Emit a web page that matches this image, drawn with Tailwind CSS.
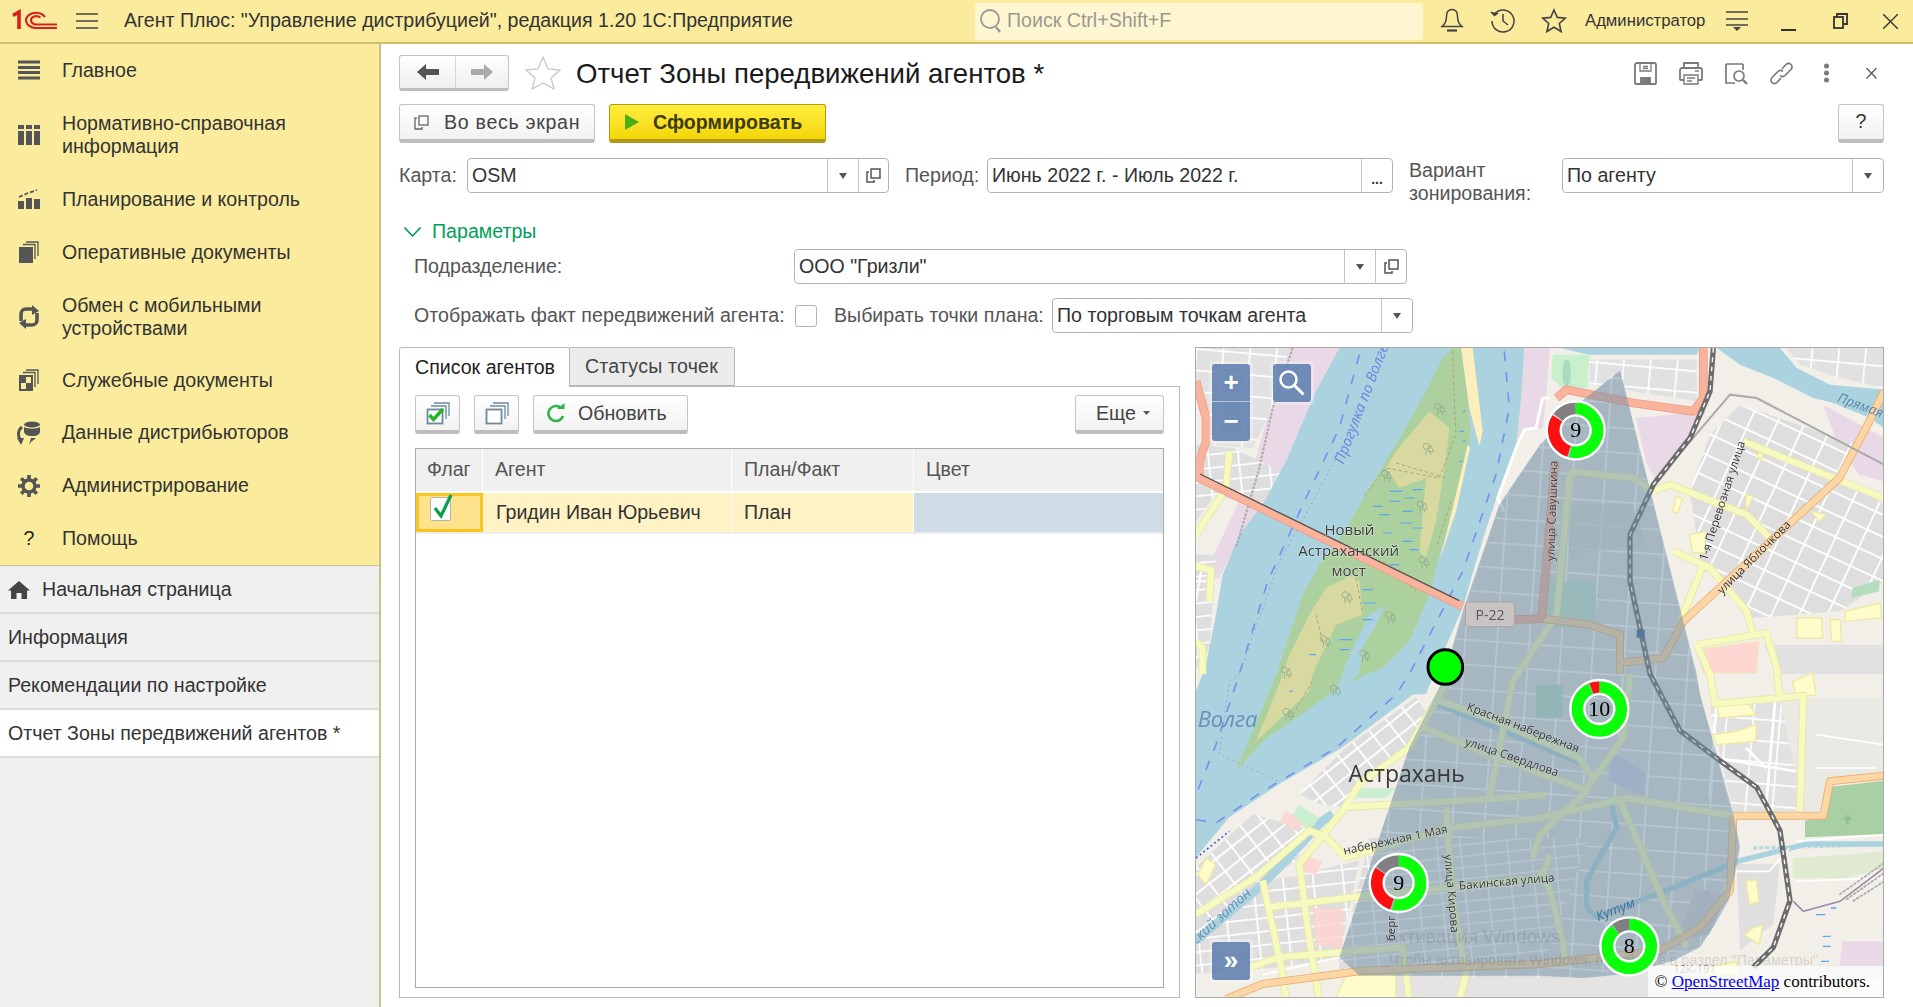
<!DOCTYPE html>
<html lang="ru">
<head>
<meta charset="utf-8">
<title>Отчет Зоны передвижений агентов</title>
<script src="https://cdn.jsdelivr.net/npm/@tailwindcss/browser@4"></script>
</head>
<body class="font-['Liberation_Sans'] text-[19.6px] text-[#333] bg-white overflow-hidden">
<div class="w-[1913px] h-[1007px] flex flex-col overflow-hidden">

<!-- TOP BAR -->
<header class="h-[44px] shrink-0 bg-[#fbec9d] border-b-2 border-[#cdbf6a] flex items-center relative">
  <svg class="ml-[12px] shrink-0" width="46" height="24" viewBox="0 0 46 24" fill="none" stroke="#d8201f"><path d="M1 6.500 L7 3 V20" stroke-width="3.600"/><path d="M33 8 A10 7.500 0 0 0 14 11.500 A9.500 8 0 0 0 24 19 H45" stroke-width="2.200"/><path d="M28.500 8.500 A5.500 4 0 0 0 19 11.500 A5.500 4.500 0 0 0 25 15.500 H45" stroke-width="2.200"/></svg>
  <svg class="ml-[18px] shrink-0" width="22" height="18" viewBox="0 0 22 18" stroke="#444" stroke-width="1.300"><path d="M0 2H22M0 9H22M0 16H22"/></svg>
  <div class="ml-[26px] w-[851px] shrink-0 whitespace-nowrap">Агент Плюс: "Управление дистрибуцией", редакция 1.20 1С:Предприятие</div>
  <div class="w-[448px] h-[37px] shrink-0 bg-[#fdf6d0] rounded-[3px] flex items-center pl-[3px] text-[#9a9a90]">
    <svg width="26" height="30" viewBox="0 0 26 30" fill="none" stroke="#999" stroke-width="1.800"><circle cx="12" cy="13" r="9"/><path d="M18 21l4 5" stroke-width="2.400"/></svg>
    <span class="ml-[3px]">Поиск Ctrl+Shift+F</span>
  </div>
  <div class="ml-[17px] flex items-center">
    <svg width="24" height="26" viewBox="0 0 24 26" fill="none" stroke="#444" stroke-width="1.500"><path d="M12 1.500c-4 0-5.500 3-5.500 7 0 5-2 8-4.500 10h20c-2.500-2-4.500-5-4.500-10 0-4-1.500-7-5.500-7z"/><path d="M7 22.500h10" stroke-width="2.200"/></svg>
    <svg class="ml-[26px]" width="26" height="26" viewBox="0 0 26 26" fill="none" stroke="#444" stroke-width="1.500"><path d="M4.500 6A11 11 0 1 1 2 13"/><path d="M1 4l3.500 3.500L8 5" fill="#444"/><path d="M13 6v7l5 4"/></svg>
    <svg class="ml-[25px]" width="26" height="26" viewBox="0 0 26 26" fill="none" stroke="#444" stroke-width="1.600"><path d="M13 2l3.300 7.400 8 .8-6 5.300 1.800 8L13 19.300 5.900 23.500l1.800-8-6-5.300 8-.8z"/></svg>
    <span class="ml-[18px] text-[16.7px] whitespace-nowrap w-[120px]">Администратор</span>
    <svg class="ml-[21px]" width="22" height="22" viewBox="0 0 22 22" stroke="#444" stroke-width="1.400"><path d="M0 2H22M0 9H22M0 15H22" /><path d="M7 17h8l-4 4z" fill="#444" stroke="none"/></svg>
    <svg class="ml-[33px]" width="15" height="22" viewBox="0 0 15 22" stroke="#333" stroke-width="2"><path d="M0 20H15"/></svg>
    <svg class="ml-[37px]" width="15" height="16" viewBox="0 0 15 16" fill="none" stroke="#333" stroke-width="1.800"><rect x="1" y="4" width="9" height="11"/><path d="M4 4V1h10v10h-4"/></svg>
    <svg class="ml-[35px]" width="15" height="15" viewBox="0 0 15 15" stroke="#333" stroke-width="1.400"><path d="M0 0L15 15M15 0L0 15"/></svg>
  </div>
</header>

<div class="flex flex-1 min-h-0">
<!-- SIDEBAR -->
<aside class="w-[381px] shrink-0 bg-[#f0f0f0] border-r-2 border-[#c9c08a] flex flex-col">
  <nav class="bg-[#fbec9d] border-b border-[#c9c08a] h-[522px] shrink-0 leading-[23px] flex flex-col">
    <a class="h-[53px] flex items-center"><span class="w-[62px] flex justify-center pr-[4px]"><svg width="22" height="20" viewBox="0 0 22 20" stroke="#555" stroke-width="3"><path d="M0 2H22M0 7.500H22M0 12.500H22M0 18H22"/></svg></span>Главное</a>
    <a class="h-[76px] flex items-center"><span class="w-[62px] flex justify-center pr-[4px]"><svg width="22" height="20" viewBox="0 0 22 20" fill="#555"><path d="M0 0h6v4H0zM8 0h6v4H8zM16 0h6v4h-6zM0 6h6v14H0zM8 6h6v14H8zM16 6h6v14h-6z"/></svg></span><span>Нормативно-справочная<br>информация</span></a>
    <a class="h-[53px] flex items-center"><span class="w-[62px] flex justify-center pr-[4px]"><svg width="22" height="20" viewBox="0 0 22 20" fill="#555"><path d="M0 12h6v8H0zM8 9h6v11H8zM16 10h6v10h-6z"/><path d="M1 8l9-4 9-3" stroke="#555" stroke-width="1.800" stroke-dasharray="4 2" fill="none"/></svg></span>Планирование и контроль</a>
    <a class="h-[53px] flex items-center"><span class="w-[62px] flex justify-center pr-[4px]"><svg width="20" height="22" viewBox="0 0 20 22" fill="#555"><path d="M0 6h14v16H0z"/><path d="M4 3.500h12V18M7 1h12v14" fill="none" stroke="#555" stroke-width="1.300"/></svg></span>Оперативные документы</a>
    <a class="h-[76px] flex items-center"><span class="w-[62px] flex justify-center pr-[4px]"><svg width="22" height="24" viewBox="0 0 22 24" fill="none" stroke="#555" stroke-width="3.600"><path d="M3 16V9a5 5 0 0 1 5-5h7"/><path d="M14 0l7 6-7 4z" fill="#555" stroke="none"/><path d="M19 8v7a5 5 0 0 1-5 5H7"/><path d="M8 24l-7-6 7-4z" fill="#555" stroke="none"/></svg></span><span>Обмен с мобильными<br>устройствами</span></a>
    <a class="h-[52px] flex items-center"><span class="w-[62px] flex justify-center pr-[4px]"><svg width="20" height="22" viewBox="0 0 20 22" fill="#555"><path d="M0 6h14v16H0z"/><path d="M7 8h5v6H7zM2 14h5v6H2z" fill="#fbec9d"/><path d="M4 3.500h12V18M7 1h12v14" fill="none" stroke="#555" stroke-width="1.300"/></svg></span>Служебные документы</a>
    <a class="h-[53px] flex items-center"><span class="w-[62px] flex justify-center pr-[4px]"><svg width="24" height="24" viewBox="0 0 24 24" fill="#555"><ellipse cx="15" cy="3.500" rx="8" ry="3"/><path d="M7 6c3 2 13 2 16 0v5c-1 4-5 4-8 4-4 0-7-1-8-4z"/><path d="M5 6C1 9 0 15 4 20" fill="none" stroke="#555" stroke-width="3"/><path d="M0 17l7 0-3 7zM12 24l2-7 5 0-5 4z"/></svg></span>Данные дистрибьюторов</a>
    <a class="h-[53px] flex items-center"><span class="w-[62px] flex justify-center pr-[4px]"><svg width="22" height="22" viewBox="0 0 22 22" fill="none" stroke="#555"><circle cx="11" cy="11" r="6" stroke-width="3.400"/><path d="M11 0v5M11 17v5M0 11h5M17 11h5M3.200 3.200l3.500 3.500M15.300 15.300l3.500 3.500M18.800 3.200l-3.500 3.500M6.700 15.300l-3.500 3.500" stroke-width="3.600"/></svg></span>Администрирование</a>
    <a class="h-[53px] flex items-center"><span class="w-[62px] flex justify-center pr-[4px] text-[#222]">?</span>Помощь</a>
  </nav>
  <a class="h-[48px] border-b-2 border-[#dcdcdc] flex items-center pl-[8px] pt-[2px]"><svg class="mr-[12px]" width="22" height="18" viewBox="0 0 22 18" fill="#444"><path d="M11 0l11 9.500h-3V18h-5.500v-6h-5v6H3V9.500H0z"/></svg>Начальная страница</a>
  <a class="h-[48px] border-b-2 border-[#dcdcdc] flex items-center pl-[8px] pt-[2px]">Информация</a>
  <a class="h-[48px] border-b-2 border-[#dcdcdc] flex items-center pl-[8px] pt-[2px]">Рекомендации по настройке</a>
  <a class="h-[48px] border-b-2 border-[#dcdcdc] bg-white flex items-center pl-[8px] pt-[2px]">Отчет Зоны передвижений агентов *</a>
</aside>

<!-- MAIN -->
<main class="flex-1 min-w-0 pl-[18px] pr-[29px] flex flex-col">
  <!-- Title row -->
  <div class="mt-[11px] h-[36px] flex items-center">
    <div class="w-[110px] h-[36px] flex rounded-[3px] border border-[#c4c4c4] border-b-[3px] border-b-[#bdbdbd] bg-linear-to-b from-white to-[#efefef]">
      <span class="w-[56px] border-r border-[#d6d6d6] flex items-center justify-center"><svg width="22" height="16" viewBox="0 0 22 16" fill="#555"><path d="M0 8l9-8v5h13v6H9v5z"/></svg></span>
      <span class="flex-1 flex items-center justify-center"><svg width="22" height="16" viewBox="0 0 22 16" fill="#aaa"><path d="M22 8l-9-8v5H0v6h13v5z"/></svg></span>
    </div>
    <svg class="ml-[16px]" width="36" height="34" viewBox="0 0 36 34" fill="#fff" stroke="#c8c8c8" stroke-width="1.300"><path d="M18 1l5 12 12 1-9 8 3 11-11-6-11 6 3-11-9-8 12-1z"/></svg>
    <h1 class="ml-[15px] pt-[1px] text-[27.6px] text-[#1a1a1a] whitespace-nowrap">Отчет Зоны передвижений агентов *</h1>
    <div class="ml-auto mr-[1px] flex items-center gap-[22px]">
      <svg width="23" height="23" viewBox="0 0 23 23" fill="none" stroke="#7a7a7a" stroke-width="1.800"><path d="M3 1h17a2 2 0 0 1 2 2v18a1 1 0 0 1-1 1H2a1 1 0 0 1-1-1V3a2 2 0 0 1 2-2z"/><path d="M6 1v8h11V1M9 4.500h5M9 6.500h5" stroke-width="1.300"/><path d="M7 22v-6h9v6" fill="#7a7a7a"/></svg>
      <svg width="24" height="23" viewBox="0 0 24 23" fill="none" stroke="#7a7a7a" stroke-width="1.800"><path d="M5 6V1h14v5M5 18H2a1 1 0 0 1-1-1V8a2 2 0 0 1 2-2h18a2 2 0 0 1 2 2v9a1 1 0 0 1-1 1h-3"/><path d="M5 13h14v9H5zM8 16h8M8 19h5M16 9h4" stroke-width="1.400"/></svg>
      <svg width="23" height="23" viewBox="0 0 23 23" fill="none" stroke="#7a7a7a" stroke-width="1.700"><path d="M18 2H2a1 1 0 0 0-1 1v18h9M18 2v6"/><circle cx="14" cy="14" r="5"/><path d="M18 18l4 4" stroke-width="2.400"/></svg>
      <svg width="23" height="23" viewBox="0 0 23 23" fill="none" stroke="#7a7a7a" stroke-width="1.700"><path d="M12 7l4-4.500a3.500 3.500 0 0 1 5 5l-6 6a3.500 3.500 0 0 1-5 0"/><path d="M11 16l-4 4.500a3.500 3.500 0 0 1-5-5l6-6a3.500 3.500 0 0 1 5 0"/></svg>
      <svg width="23" height="20" viewBox="0 0 23 20" fill="#7a7a7a"><circle cx="11.500" cy="3" r="2.500"/><circle cx="11.500" cy="10" r="2.500"/><circle cx="11.500" cy="17" r="2.500"/></svg>
      <svg width="23" height="11" viewBox="0 0 23 11" stroke="#555" stroke-width="1.200"><path d="M6.500 0l10 10.500M16.500 0l-10 10.500"/></svg>
    </div>
  </div>

  <!-- Buttons -->
  <div class="mt-[13px] flex items-start">
    <button class="w-[196px] h-[39px] rounded-[3px] border border-[#c4c4c4] border-b-4 border-b-[#bdbdbd] bg-linear-to-b from-white to-[#f2f2f2] flex items-center pl-[14px] text-[#444]">
      <svg width="15" height="15" viewBox="0 0 15 15" fill="none" stroke="#666" stroke-width="1.300"><path d="M3 3H1v11h7v-2"/><rect x="5" y="1" width="9" height="9"/></svg><span class="ml-[15px] pt-[2px] tracking-[0.7px] whitespace-nowrap">Во весь экран</span>
    </button>
    <button class="ml-[14px] w-[217px] h-[39px] rounded-[3px] border border-[#b39d0c] border-b-4 border-b-[#ae9a18] bg-linear-to-b from-[#ffee3b] to-[#f4d600] flex items-center pl-[15px] font-bold text-[#3c3c10]">
      <svg width="14" height="16" viewBox="0 0 14 16" fill="#4cae14"><path d="M0 0l14 8-14 8z"/></svg><span class="ml-[14px] pt-[2px]">Сформировать</span>
    </button>
    <button class="ml-auto w-[46px] h-[39px] rounded-[3px] border border-[#c4c4c4] border-b-4 border-b-[#bdbdbd] bg-linear-to-b from-white to-[#f2f2f2] text-[#333]">?</button>
  </div>

  <!-- Fields -->
  <div class="mt-[15px] h-[50px] flex items-start">
    <label class="w-[68px] h-[35px] pt-[1px] flex items-center text-[#555]">Карта:</label>
    <div class="w-[422px] h-[35px] border border-[#b3b3b3] rounded-[4px] flex items-center">
      <span class="flex-1 pl-[4px] pt-[1px]">OSM</span>
      <span class="w-[31px] h-full border-l border-[#c4c4c4] flex items-center justify-center"><svg width="8" height="6" viewBox="0 0 8 6" fill="#555"><path d="M0 0h8L4 6z"/></svg></span>
      <span class="w-[30px] h-full border-l border-[#c4c4c4] flex items-center justify-center"><svg width="15" height="15" viewBox="0 0 15 15" fill="none" stroke="#555" stroke-width="1.500"><path d="M3 4H1v10h7v-2"/><rect x="5" y="1" width="9" height="9"/></svg></span>
    </div>
    <label class="ml-[16px] w-[82px] h-[35px] pt-[1px] flex items-center text-[#555]">Период:</label>
    <div class="w-[406px] h-[35px] border border-[#b3b3b3] rounded-[4px] flex items-center">
      <span class="flex-1 pl-[4px] pt-[1px]">Июнь 2022 г. - Июль 2022 г.</span>
      <span class="w-[31px] h-full border-l border-[#c4c4c4] flex items-center justify-center pt-[8px] font-bold text-[14px]">...</span>
    </div>
    <label class="ml-[16px] w-[153px] leading-[23px] text-[#555] pt-[1px]">Вариант<br>зонирования:</label>
    <div class="w-[322px] h-[35px] border border-[#b3b3b3] rounded-[4px] flex items-center">
      <span class="flex-1 pl-[4px] pt-[1px]">По агенту</span>
      <span class="w-[31px] h-full border-l border-[#c4c4c4] flex items-center justify-center"><svg width="8" height="6" viewBox="0 0 8 6" fill="#555"><path d="M0 0h8L4 6z"/></svg></span>
    </div>
  </div>

  <!-- Parameters -->
  <div class="mt-[12px] h-[24px] pl-[5px] flex items-center text-[#00a05a]">
    <svg width="17" height="10" viewBox="0 0 17 10" fill="none" stroke="#00a05a" stroke-width="1.600"><path d="M0.500 0.500L8.500 9l8-8.500"/></svg>
    <span class="ml-[11px]">Параметры</span>
  </div>
  <div class="mt-[5px] h-[35px] flex items-center pl-[15px]">
    <span class="w-[380px] pt-[1px] text-[#555]">Подразделение:</span>
    <div class="w-[613px] h-[35px] border border-[#b3b3b3] rounded-[4px] flex items-center">
      <span class="flex-1 pl-[4px] pt-[1px]">ООО "Гризли"</span>
      <span class="w-[31px] h-full border-l border-[#c4c4c4] flex items-center justify-center"><svg width="8" height="6" viewBox="0 0 8 6" fill="#555"><path d="M0 0h8L4 6z"/></svg></span>
      <span class="w-[31px] h-full border-l border-[#c4c4c4] flex items-center justify-center"><svg width="15" height="15" viewBox="0 0 15 15" fill="none" stroke="#555" stroke-width="1.500"><path d="M3 4H1v10h7v-2"/><rect x="5" y="1" width="9" height="9"/></svg></span>
    </div>
  </div>
  <div class="mt-[14px] h-[35px] flex items-center pl-[15px] text-[#555]">
    <span class="w-[381px] whitespace-nowrap tracking-[0.06px]">Отображать факт передвижений агента:</span>
    <span class="w-[22px] h-[22px] border border-[#b3b3b3] rounded-[3px] bg-white"></span>
    <span class="ml-[17px] w-[218px] whitespace-nowrap">Выбирать точки плана:</span>
    <div class="w-[361px] h-[35px] border border-[#b3b3b3] rounded-[4px] flex items-center text-[#333]">
      <span class="flex-1 pl-[4px] pt-[1px]">По торговым точкам агента</span>
      <span class="w-[31px] h-full border-l border-[#c4c4c4] flex items-center justify-center"><svg width="8" height="6" viewBox="0 0 8 6" fill="#555"><path d="M0 0h8L4 6z"/></svg></span>
    </div>
  </div>

  <!-- Lower split -->
  <div class="mt-[14px] h-[651px] flex">
    <!-- Left -->
    <section class="w-[781px] shrink-0 flex flex-col">
      <div class="h-[40px] flex shrink-0 relative z-10">
        <div class="w-[171px] h-[40px] bg-white border border-[#b9b9b9] border-b-0 rounded-t-[3px] flex items-center pl-[15px] text-[#222]">Список агентов</div>
        <div class="w-[165px] h-[39px] bg-[#ebebeb] border border-l-0 border-[#b9b9b9] rounded-tr-[3px] flex items-center pl-[15px] text-[#444] tracking-[0.2px]">Статусы точек</div>
      </div>
      <div class="flex-1 border border-[#b9b9b9] -mt-px px-[15px] flex flex-col min-h-0">
        <div class="mt-[8px] h-[39px] flex items-start shrink-0">
          <button class="w-[45px] h-[39px] rounded-[3px] border border-[#c4c4c4] border-b-4 border-b-[#bdbdbd] bg-linear-to-b from-white to-[#f2f2f2] flex items-center justify-center">
            <svg width="24" height="24" viewBox="0 0 24 24" fill="none" stroke="#6b8aa0" stroke-width="1.300"><path d="M8 2h15v13M5 5h15v13"/><rect x="1.500" y="8.500" width="15" height="14" fill="#fff" stroke-width="1.800"/><path d="M3.500 14l4 4.500L17 8" stroke="#22b522" stroke-width="3.400"/></svg>
          </button>
          <button class="ml-[14px] w-[45px] h-[39px] rounded-[3px] border border-[#c4c4c4] border-b-4 border-b-[#bdbdbd] bg-linear-to-b from-white to-[#f2f2f2] flex items-center justify-center">
            <svg width="24" height="24" viewBox="0 0 24 24" fill="none" stroke="#6b8aa0" stroke-width="1.300"><path d="M8 2h15v13M5 5h15v13"/><rect x="1.500" y="8.500" width="15" height="14" fill="#fff" stroke-width="1.800"/></svg>
          </button>
          <button class="ml-[14px] w-[155px] h-[39px] rounded-[3px] border border-[#c4c4c4] border-b-4 border-b-[#bdbdbd] bg-linear-to-b from-white to-[#f2f2f2] flex items-center pl-[13px] text-[#444]">
            <svg width="18" height="20" viewBox="0 0 18 20" fill="none" stroke="#2fb34a" stroke-width="2.600"><path d="M14 5A7.500 7.500 0 1 0 16 13"/><path d="M10 6h7.500V0z" fill="#2fb34a" stroke="none"/></svg><span class="ml-[13px] pt-[2px]">Обновить</span>
          </button>
          <button class="ml-auto w-[89px] h-[39px] rounded-[3px] border border-[#c4c4c4] border-b-4 border-b-[#bdbdbd] bg-linear-to-b from-white to-[#f2f2f2] flex items-center pl-[20px] text-[#444]">
            <span class="pt-[2px]">Еще</span><svg class="ml-[7px]" width="7" height="4" viewBox="0 0 7 4" fill="#555"><path d="M0 0h7L3.500 4z"/></svg>
          </button>
        </div>
        <div class="mt-[14px] mb-[9px] flex-1 border border-[#a9a9a9] flex flex-col min-h-0">
          <div class="h-[44px] flex bg-[#f0f0f0] border-b-2 border-white shrink-0 text-[#555]">
            <div class="w-[67px] border-r border-white flex items-center pl-[11px]">Флаг</div>
            <div class="w-[249px] border-r border-white flex items-center pl-[12px]">Агент</div>
            <div class="w-[182px] border-r border-white flex items-center pl-[12px]">План/Факт</div>
            <div class="flex-1 flex items-center pl-[12px]">Цвет</div>
          </div>
          <div class="h-[41px] flex border-b-2 border-[#ededed] shrink-0 text-[#333]">
            <div class="w-[67px] bg-[#ffe28c] border-[3px] border-[#f7c51e] flex pl-[11px] pt-[1px]">
              <span class="relative block w-[21px] h-[24px] bg-white border border-[#b3b3b3] rounded-[2px]"><svg class="absolute -top-[6px] left-[2px]" width="22" height="28" viewBox="0 0 22 28" fill="none" stroke="#0b9e4a" stroke-width="3.200"><path d="M2 16l6 8L18 3"/></svg></span>
            </div>
            <div class="w-[249px] bg-[#fff2c4] border-r border-white flex items-center pl-[13px] pt-[1px] whitespace-nowrap">Гридин Иван Юрьевич</div>
            <div class="w-[182px] bg-[#fff2c4] border-r border-white flex items-center pl-[12px] pt-[1px]">План</div>
            <div class="flex-1 bg-[#cfdce5]"></div>
          </div>
        </div>
      </div>
    </section>

    <!-- Map -->
    <section class="ml-[15px] w-[689px] h-[651px] shrink-0 relative overflow-hidden border border-[#aaa]">
      <svg class="block blur-[0.35px]" width="688" height="651" viewBox="0 0 2064 1953" font-family="Open Sans, Noto Sans, sans-serif">
        <defs>
          <pattern id="g1" width="76" height="60" patternUnits="userSpaceOnUse" patternTransform="rotate(25)"><rect width="76" height="60" fill="#dfdede"/><path d="M0 2H76M2 0V60" stroke="#fff" stroke-width="7"/></pattern>
          <pattern id="g2" width="60" height="46" patternUnits="userSpaceOnUse" patternTransform="rotate(-38)"><rect width="60" height="46" fill="#dfdede"/><path d="M0 2H60M2 0V46" stroke="#fff" stroke-width="7"/></pattern>
          <pattern id="g3" width="90" height="40" patternUnits="userSpaceOnUse" patternTransform="rotate(-6)"><rect width="90" height="40" fill="#dfdede"/><path d="M0 2H90M2 0V40" stroke="#fff" stroke-width="6"/></pattern>
          <pattern id="g4" width="80" height="64" patternUnits="userSpaceOnUse" patternTransform="rotate(5)"><rect width="80" height="64" fill="#e2e1e1"/><path d="M0 2H80M2 0V64" stroke="#fff" stroke-width="6"/></pattern>
          <pattern id="c1" width="96" height="74" patternUnits="userSpaceOnUse" patternTransform="rotate(4)"><rect width="96" height="74" fill="#dededf"/><path d="M0 2H96M2 0V74" stroke="#fff" stroke-width="7"/></pattern>
          <pattern id="c2" width="70" height="34" patternUnits="userSpaceOnUse" patternTransform="rotate(-6)"><rect width="70" height="34" fill="#dededf"/><path d="M0 2H70M2 0V34" stroke="#fff" stroke-width="5"/></pattern>
          <path id="yr" d="M1642 280L1912 390L2064 450M1372 430L1422 410L1652 500L1722 570M1432 610L1542 660L1652 790L1672 860M1522 650L1452 820M1502 890L1712 855L1747 978M1502 890L1542 978L1557 1068L1822 1043L1812 1388M1742 978L1752 1048M750 1008L640 1198L490 1308L440 1388L310 1548L340 1778L370 1956M0 1698L180 1588L340 1448L390 1468L450 1528L760 1440L1032 1410L1250 1360L1290 1350L1610 1403M440 1378L880 1353L1050 1340M1122 370L1082 800L950 1000L880 1353M1122 370L1312 390L1372 430M730 1058L900 1118L1150 1230L1190 1290M1302 978L1282 1168L1160 1340L1032 1460L1010 1530M1272 1358L1402 1658L1472 1798M680 1138L900 1228L1180 1330M750 1378L770 1660L810 1878L790 1956M200 1598L260 1878L270 1956M160 1858L250 1828L620 1798L640 1956M220 1678L470 1648L1040 1590L1060 1520M1032 1568L1062 1628L1100 1778L1110 1856M0 655L45 665L40 760M0 880L20 900L20 978M100 310L90 420L0 560" fill="none" stroke-linejoin="round"/>
          <path id="or" d="M2064 130L2020 220L1930 390L1462 820L1402 930L1272 945L1272 978M1272 945L1272 860L1180 830L1042 812M1612 1403L1882 1403L1902 1300L2064 1283M1612 1403L1602 1628L1512 1738L1392 1808L1032 1848L500 1868L200 1908L90 1953" fill="none" stroke-linejoin="round"/>
          <path id="sm" d="M0 100L30 210L30 280L10 340L10 390L800 775M1522 0L1522 150L1492 190L1312 165L1112 125L1082 150M955 815L1042 812M1077 340L1052 640L1037 810" fill="none" stroke-linejoin="round"/>
          <path id="rl" d="M1552 0L1542 130L1482 270L1372 410L1302 560L1302 700L1362 978L1452 1148L1572 1238L1682 1318L1752 1448L1782 1658L1732 1798L1672 1858" fill="none" stroke-linejoin="round"/>
          <g id="tr" fill="none" stroke="#8fa98d" stroke-width="2.500"><circle cx="0" cy="-10" r="9"/><path d="M0 -1V16M14 16V6M14 -14l8 20h-16z"/></g>
        </defs>

        <rect width="2064" height="1953" fill="#f2efe9"/>
        <!-- pink -->
        <g fill="#e9d8e6">
          <path d="M270 0H430L370 130L270 350L200 480L130 570L70 690L20 690L120 480L180 330Z"/>
          <path d="M985 0H1062L1052 130L1040 240L985 250L960 300L900 450L880 520L840 640L720 980L660 980Z"/>
          <path d="M1320 210L1532 190L1380 400L1350 340Z"/>
          <path d="M1882 170L2064 270V400L1990 380L1930 300Z"/>
          <path d="M1940 1780H2064V1860H1930Z"/>
        </g>
        <!-- residential -->
        <path d="M0 0H280L230 180L170 300L40 290L0 100Z" fill="url(#g4)"/>
        <path d="M0 290L110 300L260 370L190 480L60 440L0 520Z" fill="url(#g3)"/>
        <path d="M0 620H60L40 900L0 960Z" fill="url(#g3)"/>
        <path d="M1182 35H1502V160L1182 110Z" fill="url(#g4)"/>
        <path d="M1772 0H2064V120L1932 90L1812 50Z" fill="url(#g4)"/>
        <path d="M1482 430L1542 260L1632 170L1982 290L1922 380L2064 470V700L1932 790L1672 810L1512 640Z" fill="url(#g1)"/>
        <path d="M660 1048L700 1108L640 1198L470 1318L440 1378L370 1368L310 1338L450 1198Z" fill="url(#g2)"/>
        <path d="M0 1558L170 1398L350 1448L300 1538L210 1598L0 1758Z" fill="url(#g2)"/>
        <path d="M220 1598L490 1538L430 1828L250 1858L0 1878V1758Z" fill="url(#g3)"/>
        <path d="M1542 1078L1812 1058L1812 1388L1612 1398Z" fill="url(#g4)"/>
        <path d="M1622 1548L1752 1548L1732 1728L1632 1808Z" fill="#e0dfdf"/>
        <path d="M500 1878L2064 1850V1953H500Z" fill="#e0dfdf" opacity=".7"/>
        <path d="M1702 890H2064V978H1752Z" fill="#e2e1e1"/>
        <path d="M1750 1050H2064V1290H1900L1880 1390H1825Z" fill="#ebe9e4"/>
        <!-- city under zone -->
        <path d="M1272 60L1512 1038L1632 1498L1512 1798L1162 1890L430 1883L430 1828L640 1198L740 998L910 470L1032 290Z" fill="url(#c1)"/>
        <path d="M520 1470H1180L1040 1860H430Z" fill="url(#c2)"/>
        <path d="M1110 470H1310L1350 590L1120 620Z" fill="#d5d8cc" opacity=".7"/>
        <path d="M1020 1010H1100V1110H1020Z" fill="#b7dcc4"/>
        <path d="M1050 700H1200V840L1050 840Z" fill="#c7e3cf"/>
        <path d="M1240 1200L1350 1280L1340 1340L1240 1300Z" fill="#cdd0e6"/>
        <path d="M1500 1620L1590 1640L1540 1760L1440 1780Z" fill="#d8d3d8"/>
        <!-- water -->
        <g fill="#aad3df">
          <path d="M430 0H985L975 150L960 300L905 440L870 540L800 780L730 940L690 1038L650 1040L440 1198L250 1308L100 1408L0 1528V1030L30 950L60 800L80 680L130 560L200 470L270 340L360 130Z"/>
          <path d="M1562 0H1752L1802 60L1902 110L2064 125V240L2022 210L1912 165L1852 150L1732 90L1632 50Z"/>
          <path d="M1092 0H1512L1502 20L1180 20Z"/>
        </g>
        <g fill="none" stroke="#aad3df" stroke-linejoin="round">
          <path d="M1172 1678L1202 1708L1382 1638L1632 1538L1832 1488L2064 1488" stroke-width="16"/>
          <path d="M1172 1678L1172 1598L1262 1438L1247 1368" stroke-width="16"/>
          <path d="M0 1778L190 1618L270 1538L380 1418L410 1398" stroke-width="26"/>
          <path d="M720 1068L900 1140L1160 1250" stroke-width="14"/>
        </g>
        <!-- island -->
        <path d="M770 0H800L825 250L810 330L780 480L730 620L700 740L640 880L560 960L510 978L400 1040L200 1180L120 1270L240 980L320 740L370 650L440 560L520 420L600 290L690 130L740 30Z" fill="#add19e"/>
        <path d="M570 770L540 830L500 900L490 978L430 1030L410 1060L440 970L480 880L520 800Z" fill="#aad3df"/>
        <g fill="#d8d9a0">
          <path d="M700 190L600 310L570 360L610 420L690 390L670 610L690 630L720 520L750 330L760 240Z"/>
          <path d="M470 680L390 720L340 800L280 920L250 1008L180 1180L340 1030L350 978L420 830L500 800L490 700Z"/>
        </g>
        <g fill="#fdeebd">
          <path d="M795 0H830L860 250L850 295L820 180Z"/>
          <path d="M815 290L822 300L780 490L730 640L770 480Z"/>
        </g>
        <g fill="none" stroke="#b8a067" stroke-width="3" stroke-dasharray="10 8">
          <path d="M770 10L775 150L780 260L730 390L570 360L500 450M600 345L750 390M765 460L720 600M480 690L500 800M360 800L380 880M560 640L660 730M350 1000L290 1100"/>
        </g>
        <path d="M580 430h40M650 425h30M530 475h30M580 460h30M625 450h30M550 500h30M620 490h30M610 525h40M560 555h30M650 540h30M620 580h30M640 605h30M580 650h30M500 725h30M500 765h40M500 815h30M430 875h40M430 905h30M340 920h20M280 1030h10M800 190h10M790 250h15M800 280h10M790 340h10" stroke="#5aa8f5" stroke-width="3.500" fill="none"/>
        <use href="#tr" x="725" y="185"/><use href="#tr" x="690" y="305"/><use href="#tr" x="565" y="385"/><use href="#tr" x="672" y="478"/><use href="#tr" x="678" y="645"/><use href="#tr" x="447" y="750"/><use href="#tr" x="577" y="810"/><use href="#tr" x="382" y="882"/><use href="#tr" x="500" y="925"/><use href="#tr" x="265" y="975"/><use href="#tr" x="270" y="1100"/>
        <use href="#tr" x="412" y="1030"/>
        <!-- river lines -->
        <g fill="none" stroke="#7b8ff0" stroke-width="5" stroke-dasharray="30 32">
          <path d="M490 20L430 240L330 450L215 700L130 978L60 1190L0 1340"/>
          <path d="M925 10L940 180L900 380L800 670L640 978L600 1040L420 1200L200 1330L60 1425L0 1415"/>
        </g>
        <path d="M500 180L340 480L250 640L130 978L100 1000L70 1220L250 1300" fill="none" stroke="#a7a0c0" stroke-width="3" stroke-dasharray="6 10"/>
        <path d="M0 1530L100 1450" fill="none" stroke="#3b62dd" stroke-width="5" stroke-dasharray="6 8"/>
        <path d="M290 0L230 180L190 360L120 600" fill="none" stroke="#aaa" stroke-width="6" stroke-dasharray="8 4"/>
        <!-- white roads -->
        <g fill="none" stroke="#fff" stroke-linejoin="round">
          <path d="M1062 150L1040 150L1020 240L985 245L960 300L905 450L925 490" stroke-width="9"/>
          <path d="M1737 1060L1710 1380M1560 1230L1800 1270M1562 1060L1540 1350M1710 1260L1650 1200" stroke-width="8"/>
          <path d="M1590 1570H1720L1780 1500M1800 1600L2064 1590M1800 1480L2064 1460" stroke-width="5"/>
          <path d="M1860 1160L2064 1190M1860 1260H2040" stroke-width="5"/>
          <path d="M20 640L0 760M0 700H40M200 1880L640 1780" stroke-width="6"/>
        </g>
        <!-- green & buildings -->
        <path d="M1892 1318L2064 1298V1458L1827 1468V1418L1882 1408Z" fill="#a9cfa4"/>
        <path d="M1955 1400v30M1943 1412h24" stroke="#8fc08a" stroke-width="7"/>
        <path d="M1790 1530L1950 1520L2064 1510V1560L1950 1590H1790Z" fill="#dfead0"/>
        <path d="M1070 20H1180L1175 120L1100 120L1065 90Z" fill="#c9f0cd"/>
        <path d="M1100 60a12 25 0 0 1 24 0v30a12 25 0 0 1-24 0z" fill="#a8dcc0"/>
        <path d="M1970 720L2050 695L2050 730L1965 750Z" fill="#b4ddbd"/>
        <path d="M1505 905L1690 880L1680 975L1520 975Z" fill="#ffd6d2" stroke="#ececa0" stroke-width="2"/>
        <path d="M1700 1890H2064V1953H1700Z" fill="#f2efe9"/>
        <g fill="#fffccc" stroke="#ece8a2" stroke-width="4">
          <path d="M1947 790L2052 765L2057 810L1947 820Z"/>
          <path d="M1802 810L1877 810L1880 870L1802 870Z"/>
          <path d="M1902 815L1932 815L1937 880L1907 880Z"/>
          <path d="M1480 560L1530 550L1525 615L1490 615Z"/>
          <path d="M1650 440L1672 445L1650 490Z"/>
          <path d="M1440 445L1460 450L1445 495L1430 490Z"/>
          <path d="M1680 315L1700 315L1695 340Z"/>
          <path d="M1845 490L1890 500L1870 520Z"/>
          <path d="M1560 1060L1660 1070L1680 1100L1570 1110Z"/>
          <path d="M1620 1150L1680 1130L1680 1180L1560 1190L1550 1160Z"/>
          <path d="M1650 1600L1680 1595L1690 1660L1660 1670Z"/>
          <path d="M1670 1740L1700 1730L1690 1790L1645 1760Z"/>
          <path d="M30 1530L60 1550L30 1610L5 1580Z"/>
          <path d="M1790 1000L1850 975L1860 1040L1800 1050Z"/>
          <path d="M1540 1860L1620 1840L1630 1880L1530 1885Z"/>
          <path d="M450 1880H600V1950H420Z"/>
        </g>
        <g fill="#ffd3cf" opacity=".8">
          <path d="M350 1680H440V1800L360 1790Z"/><path d="M320 1520L380 1540L360 1580L310 1570Z"/>
          <path d="M270 1390L330 1420L300 1450L250 1420Z"/>
        </g>
        <g fill="#c8f0d0" opacity=".9"><path d="M310 1370L370 1410L340 1450L290 1400Z"/><path d="M490 1320H600L570 1350H480Z"/></g>
        <!-- roads -->
        <use href="#yr" stroke="#e5e7a6" stroke-width="23"/><use href="#yr" stroke="#f7fabf" stroke-width="18"/>
        <use href="#or" stroke="#e8ae6d" stroke-width="24"/><use href="#or" stroke="#fcd6a4" stroke-width="19"/>
        <use href="#sm" stroke="#ef9c85" stroke-width="26"/><use href="#sm" stroke="#f9b29c" stroke-width="21"/>
        <path d="M12 378L790 758" fill="none" stroke="#555" stroke-width="4"/>
        <path d="M1672 1500L2064 1490" stroke="#aad3df" stroke-width="10" stroke-dasharray="12 6" fill="none" opacity=".8"/>
        <path d="M1372 410L1602 140L1682 150L2064 350" fill="none" stroke="#aaa" stroke-width="6"/>
        <path d="M1792 1660L1822 1690L1932 1660L2064 1560" fill="none" stroke="#a08aa8" stroke-width="5"/>
        <path d="M1930 1640L2064 1545M1950 1655L2064 1575M1970 1660L2064 1600" fill="none" stroke="#aaa" stroke-width="5" stroke-dasharray="10 3"/>
        <use href="#rl" stroke="#6c6c6c" stroke-width="16"/><use href="#rl" stroke="#fff" stroke-width="4" stroke-dasharray="14 14"/>
        <path d="M1860 1700h28M1880 1765h24M1880 1795h24M1875 1840h24M1905 1680h16" stroke="#5aa8f5" stroke-width="4"/>
        <rect x="1322" y="845" width="24" height="24" fill="#3c5f98" />

        <!-- zone -->
        <path d="M1272 68L1502 978L1512 1038L1612 1398L1632 1498L1617 1578L1597 1658L1552 1738L1512 1798L1432 1838L1292 1878L1162 1890L1032 1883L490 1883L430 1828L640 1198L740 998L800 790L910 470L1032 290L1162 155Z" fill="#6d8fa6" fill-opacity=".5"/>

        <!-- labels -->
        <g text-anchor="middle" fill="#3a3a3a" font-size="45" paint-order="stroke" stroke="#ffffff" stroke-opacity=".5" stroke-width="3">
          <text x="460" y="562">Новый</text><text x="458" y="624">Астраханский</text><text x="458" y="684">мост</text>
        </g>
        <text x="632" y="1302" text-anchor="middle" font-size="69" fill="#3a3a3a">Астрахань</text>
        <text x="5" y="1138" font-size="66" font-style="italic" fill="#6a8fb5">Волга</text>
        <text transform="translate(442 350) rotate(-69)" font-size="44" font-style="italic" fill="#6f7fe0">Прогулка по Волге</text>
        <text transform="translate(1922 160) rotate(20)" font-size="40" font-style="italic" fill="#5c86ad">Прямая</text>
        <text transform="translate(1207 1720) rotate(-22)" font-size="40" font-style="italic" fill="#3e6d98">Кутум</text>
        <text transform="translate(0 1790) rotate(-42)" font-size="42" font-style="italic" fill="#6a8fb5">ский затон</text>
        <g font-size="35" fill="#333" paint-order="stroke" stroke="#ffffff" stroke-opacity=".35" stroke-width="3">
          <text transform="translate(1075 640) rotate(-88)" fill="#403535">улица Савушкина</text>
          <text transform="translate(1578 740) rotate(-45)">улица Яблочкова</text>
          <text transform="translate(1532 640) rotate(-72)">1-я Перевозная улица</text>
          <text transform="translate(810 1085) rotate(21)">Красная набережная</text>
          <text transform="translate(805 1190) rotate(19)">улица Свердлова</text>
          <text transform="translate(445 1520) rotate(-12)">набережная 1 Мая</text>
          <text transform="translate(745 1520) rotate(85)">улица Кирова</text>
          <text transform="translate(790 1625) rotate(-5)">Бакинская улица</text>
          <text transform="translate(598 1780) rotate(-90)">берг</text>
        </g>
        <g>
          <rect x="808" y="762" width="148" height="74" rx="8" fill="#c9c3c3" stroke="#a9a3a3" stroke-width="3"/>
          <text x="882" y="815" text-anchor="middle" font-size="42" fill="#55555f">Р-22</text>
        </g>
        <text x="1432" y="1875" font-size="34" fill="#5e4e3a" opacity=".8">12К-191</text>
        <g fill="#555" fill-opacity=".18" font-family="Liberation Sans">
          <text x="568" y="1785" font-size="57">Активация Windows</text>
          <text x="580" y="1850" font-size="43">Чтобы активировать Windows, перейдите в раздел "Параметры".</text>
        </g>

        <!-- green point -->
        <circle cx="748" cy="957" r="52" fill="#00ff00" stroke="#000" stroke-width="9"/>

        <!-- donuts -->
        <g fill="none" font-family="Liberation Serif">
          <g transform="translate(1139 247)">
            <circle r="65" stroke="#0bff0b" stroke-width="37" pathLength="360" stroke-dasharray="193 167" transform="rotate(-90)"/>
            <circle r="65" stroke="#ff1010" stroke-width="37" pathLength="360" stroke-dasharray="105 255" stroke-dashoffset="-197" transform="rotate(-90)"/>
            <circle r="65" stroke="#808080" stroke-width="37" pathLength="360" stroke-dasharray="54 306" stroke-dashoffset="-305" transform="rotate(-90)"/>
            <circle r="87" stroke="#fff" stroke-width="7"/><circle r="45" stroke="#fff" stroke-width="7"/>
            <text y="21" text-anchor="middle" font-size="66" fill="#000">9</text>
          </g>
          <g transform="translate(1210 1083)">
            <circle r="65" stroke="#0bff0b" stroke-width="37" pathLength="360" stroke-dasharray="335 25" transform="rotate(-90)"/>
            <circle r="65" stroke="#ff1010" stroke-width="37" pathLength="360" stroke-dasharray="21 339" stroke-dashoffset="-337" transform="rotate(-90)"/>
            <circle r="87" stroke="#fff" stroke-width="7"/><circle r="45" stroke="#fff" stroke-width="7"/>
            <text y="22" text-anchor="middle" font-size="66" fill="#000">10</text>
          </g>
          <g transform="translate(608 1605)">
            <circle r="65" stroke="#0bff0b" stroke-width="37" pathLength="360" stroke-dasharray="193 167" transform="rotate(-90)"/>
            <circle r="65" stroke="#ff1010" stroke-width="37" pathLength="360" stroke-dasharray="105 255" stroke-dashoffset="-197" transform="rotate(-90)"/>
            <circle r="65" stroke="#808080" stroke-width="37" pathLength="360" stroke-dasharray="54 306" stroke-dashoffset="-305" transform="rotate(-90)"/>
            <circle r="87" stroke="#fff" stroke-width="7"/><circle r="45" stroke="#fff" stroke-width="7"/>
            <text y="21" text-anchor="middle" font-size="66" fill="#000">9</text>
          </g>
          <g transform="translate(1300 1795)">
            <circle r="65" stroke="#0bff0b" stroke-width="37" pathLength="360" stroke-dasharray="318 42" transform="rotate(-90)"/>
            <circle r="65" stroke="#808080" stroke-width="37" pathLength="360" stroke-dasharray="38 322" stroke-dashoffset="-320" transform="rotate(-90)"/>
            <circle r="87" stroke="#fff" stroke-width="7"/><circle r="45" stroke="#fff" stroke-width="7"/>
            <text y="21" text-anchor="middle" font-size="66" fill="#000">8</text>
          </g>
        </g>
      </svg>

      <!-- map controls -->
      <div class="absolute left-[13px] top-[13px] p-[3px] rounded-[4px] bg-white/30">
        <div class="w-[38px] h-[77px] rounded-[3px] bg-[#5a7bad]/85 flex flex-col text-white font-bold">
          <span class="h-[38px] border-b border-white/50 flex items-center justify-center text-[26px]">+</span>
          <span class="flex-1 flex items-center justify-center text-[26px]">−</span>
        </div>
      </div>
      <div class="absolute left-[74px] top-[13px] p-[3px] rounded-[4px] bg-white/30">
        <div class="w-[38px] h-[38px] rounded-[3px] bg-[#5a7bad]/85 flex items-center justify-center">
          <svg width="28" height="28" viewBox="0 0 28 28" fill="none" stroke="#fff" stroke-width="2.500"><circle cx="10.500" cy="10.500" r="8"/><path d="M16.500 16.500l9 9" stroke-width="3"/></svg>
        </div>
      </div>
      <div class="absolute left-[13px] bottom-[14px] p-[3px] rounded-[4px] bg-white/30">
        <div class="w-[38px] h-[38px] rounded-[3px] bg-[#5a7bad]/85 flex items-center justify-center text-white font-bold text-[26px] leading-none pb-[3px]">»</div>
      </div>
      <div class="absolute right-0 bottom-0 h-[31px] w-[235px] bg-white/75 flex items-center justify-end pr-[13px] font-['Liberation_Serif'] text-[17px] text-black whitespace-nowrap">©&nbsp;<a class="text-[#0000ee] underline">OpenStreetMap</a>&nbsp;contributors.</div>
    </section>
  </div>
</main>
</div>
</div>
</body>
</html>
